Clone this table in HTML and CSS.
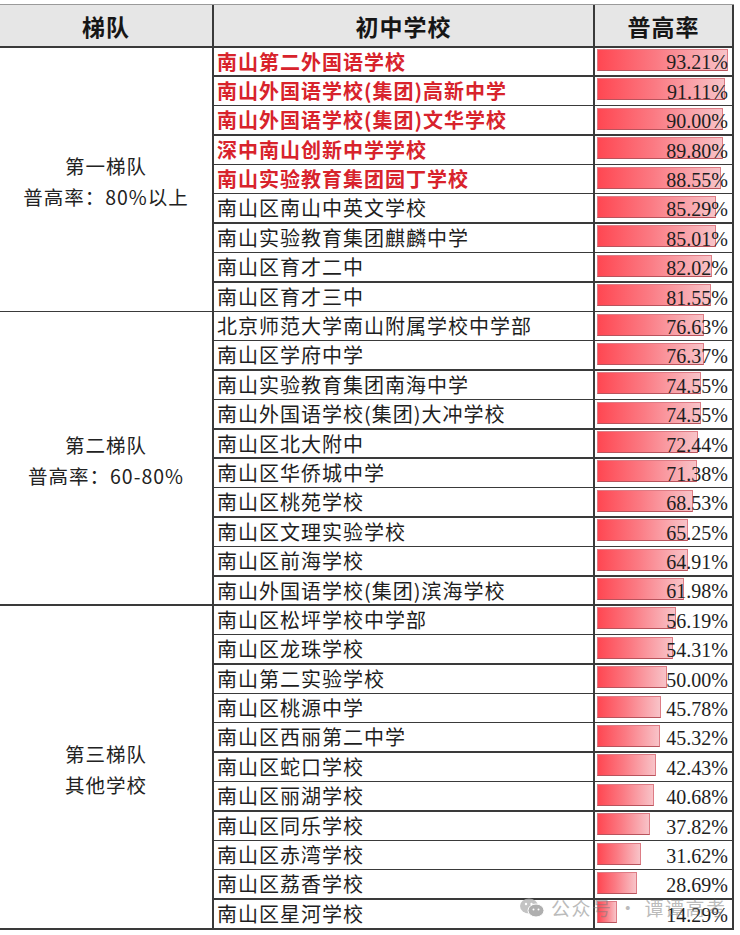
FILE: index.html
```html
<!DOCTYPE html>
<html lang="zh-CN">
<head>
<meta charset="utf-8">
<title>梯队 初中学校 普高率</title>
<link rel="stylesheet" href="styles.css">
</head>
<body>
<div class="sheet">
  <div class="table">
    <div class="hd c1">梯队</div>
    <div class="hd c2">初中学校</div>
    <div class="hd c3">普高率</div>

    <div class="group g1"><div>第一梯队</div><div>普高率：80%以上</div></div>
    <div class="group g2"><div>第二梯队</div><div>普高率：60-80%</div></div>
    <div class="group g3"><div>第三梯队</div><div>其他学校</div></div>

    <div class="name hot">南山第二外国语学校</div><div class="rate"><span class="bar" style="width:130.5px"></span><span class="num">93.21%</span></div>
    <div class="name hot">南山外国语学校(集团)高新中学</div><div class="rate"><span class="bar" style="width:127.6px"></span><span class="num">91.11%</span></div>
    <div class="name hot">南山外国语学校(集团)文华学校</div><div class="rate"><span class="bar" style="width:126.0px"></span><span class="num">90.00%</span></div>
    <div class="name hot">深中南山创新中学学校</div><div class="rate"><span class="bar" style="width:125.7px"></span><span class="num">89.80%</span></div>
    <div class="name hot">南山实验教育集团园丁学校</div><div class="rate"><span class="bar" style="width:124.0px"></span><span class="num">88.55%</span></div>
    <div class="name">南山区南山中英文学校</div><div class="rate"><span class="bar" style="width:119.4px"></span><span class="num">85.29%</span></div>
    <div class="name">南山实验教育集团麒麟中学</div><div class="rate"><span class="bar" style="width:119.0px"></span><span class="num">85.01%</span></div>
    <div class="name">南山区育才二中</div><div class="rate"><span class="bar" style="width:114.8px"></span><span class="num">82.02%</span></div>
    <div class="name">南山区育才三中</div><div class="rate"><span class="bar" style="width:114.2px"></span><span class="num">81.55%</span></div>

    <div class="name">北京师范大学南山附属学校中学部</div><div class="rate"><span class="bar" style="width:107.3px"></span><span class="num">76.63%</span></div>
    <div class="name">南山区学府中学</div><div class="rate"><span class="bar" style="width:106.9px"></span><span class="num">76.37%</span></div>
    <div class="name">南山实验教育集团南海中学</div><div class="rate"><span class="bar" style="width:104.4px"></span><span class="num">74.55%</span></div>
    <div class="name">南山外国语学校(集团)大冲学校</div><div class="rate"><span class="bar" style="width:104.4px"></span><span class="num">74.55%</span></div>
    <div class="name">南山区北大附中</div><div class="rate"><span class="bar" style="width:101.4px"></span><span class="num">72.44%</span></div>
    <div class="name">南山区华侨城中学</div><div class="rate"><span class="bar" style="width:99.9px"></span><span class="num">71.38%</span></div>
    <div class="name">南山区桃苑学校</div><div class="rate"><span class="bar" style="width:95.9px"></span><span class="num">68.53%</span></div>
    <div class="name">南山区文理实验学校</div><div class="rate"><span class="bar" style="width:91.4px"></span><span class="num">65.25%</span></div>
    <div class="name">南山区前海学校</div><div class="rate"><span class="bar" style="width:90.9px"></span><span class="num">64.91%</span></div>
    <div class="name">南山外国语学校(集团)滨海学校</div><div class="rate"><span class="bar" style="width:86.8px"></span><span class="num">61.98%</span></div>

    <div class="name">南山区松坪学校中学部</div><div class="rate"><span class="bar" style="width:78.7px"></span><span class="num">56.19%</span></div>
    <div class="name">南山区龙珠学校</div><div class="rate"><span class="bar" style="width:76.0px"></span><span class="num">54.31%</span></div>
    <div class="name">南山第二实验学校</div><div class="rate"><span class="bar" style="width:70.0px"></span><span class="num">50.00%</span></div>
    <div class="name">南山区桃源中学</div><div class="rate"><span class="bar" style="width:64.1px"></span><span class="num">45.78%</span></div>
    <div class="name">南山区西丽第二中学</div><div class="rate"><span class="bar" style="width:63.4px"></span><span class="num">45.32%</span></div>
    <div class="name">南山区蛇口学校</div><div class="rate"><span class="bar" style="width:59.4px"></span><span class="num">42.43%</span></div>
    <div class="name">南山区丽湖学校</div><div class="rate"><span class="bar" style="width:57.0px"></span><span class="num">40.68%</span></div>
    <div class="name">南山区同乐学校</div><div class="rate"><span class="bar" style="width:52.9px"></span><span class="num">37.82%</span></div>
    <div class="name">南山区赤湾学校</div><div class="rate"><span class="bar" style="width:44.3px"></span><span class="num">31.62%</span></div>
    <div class="name">南山区荔香学校</div><div class="rate"><span class="bar" style="width:40.2px"></span><span class="num">28.69%</span></div>
    <div class="name">南山区星河学校</div><div class="rate"><span class="bar" style="width:20.0px"></span><span class="num">14.29%</span></div>
  </div>

  <div class="watermark">
    <svg class="wm-icon" width="26" height="22" viewBox="0 0 26 22">
      <ellipse cx="10" cy="9" rx="9" ry="7.5" fill="#b5b5b5"/>
      <ellipse cx="17" cy="13.5" rx="8" ry="6.5" fill="#9c9c9c" stroke="#fff" stroke-width="1"/>
      <circle cx="7" cy="7" r="1.2" fill="#fff"/>
      <circle cx="12.5" cy="7" r="1.2" fill="#fff"/>
      <circle cx="14.5" cy="12.5" r="1" fill="#fff"/>
      <circle cx="19.5" cy="12.5" r="1" fill="#fff"/>
    </svg>
    <span>公众号 · 谭谭高考</span>
  </div>
</div>
</body>
</html>
```

FILE: styles.css
```css
html, body {
  margin: 0;
  padding: 0;
  background: #ffffff;
}

.sheet {
  position: relative;
  width: 740px;
  height: 935px;
  padding-top: 4px;
  box-sizing: border-box;
}

.table {
  display: grid;
  grid-template-columns: 212px 379px 137px;
  grid-template-rows: 41px repeat(30, 27.9px);
  column-gap: 2px;
  row-gap: 1.5px;
  width: 734px;
  padding: 0 2px 2px 0;
  box-sizing: border-box;
  background: #3a3a3a;
  border-top: 1px solid #9a9a9a;
}

.hd {
  background: #e6e6e6;
  display: flex;
  align-items: center;
  justify-content: center;
  font-family: "Noto Sans CJK SC", sans-serif;
  font-weight: 700;
  font-size: 23px;
  color: #161616;
  letter-spacing: 1px;
}
.hd.c1 { grid-column: 1; grid-row: 1; }
.hd.c2 { grid-column: 2; grid-row: 1; }
.hd.c3 { grid-column: 3; grid-row: 1; }

.group {
  grid-column: 1;
  background: #ffffff;
  display: flex;
  flex-direction: column;
  align-items: center;
  justify-content: center;
  font-family: "Noto Sans CJK SC", sans-serif;
  font-size: 19.5px;
  line-height: 31px;
  color: #222;
  letter-spacing: 1px;
  padding-top: 4px;
}
.g1 { grid-row: 2 / span 9; }
.g2 { grid-row: 11 / span 10; }
.g3 { grid-row: 21 / span 11; }

.name {
  grid-column: 2;
  background: #ffffff;
  font-family: "Noto Sans CJK SC", sans-serif;
  font-size: 20px;
  line-height: 27.9px;
  letter-spacing: 1px;
  color: #1e1e1e;
  padding-left: 3px;
  white-space: nowrap;
  overflow: hidden;
}
.name.hot {
  color: #d8232c;
  font-weight: 700;
}

.rate {
  grid-column: 3;
  background: #ffffff;
  position: relative;
  display: flex;
  align-items: center;
  justify-content: flex-end;
  padding-right: 4px;
}

.bar {
  position: absolute;
  left: 2px;
  top: 1.5px;
  height: 22px;
  box-sizing: border-box;
  background: linear-gradient(to right, #ff4752 0%, #fb7a83 45%, #f8c3c8 100%);
  border: 1px solid #dd7c85;
  border-bottom-color: #b8545d;
}

.num {
  position: relative;
  font-family: "Liberation Serif", serif;
  font-size: 20px;
  color: #1e1e1e;
  line-height: 24px;
  margin-top: 2px;
}

.watermark {
  position: absolute;
  left: 519px;
  top: 894px;
  display: flex;
  align-items: center;
  gap: 6px;
  font-family: "Noto Sans CJK SC", sans-serif;
  font-size: 19px;
  color: rgba(120, 120, 120, 0.5);
  letter-spacing: 1.5px;
  pointer-events: none;
}
.wm-icon {
  opacity: 0.8;
}
```
